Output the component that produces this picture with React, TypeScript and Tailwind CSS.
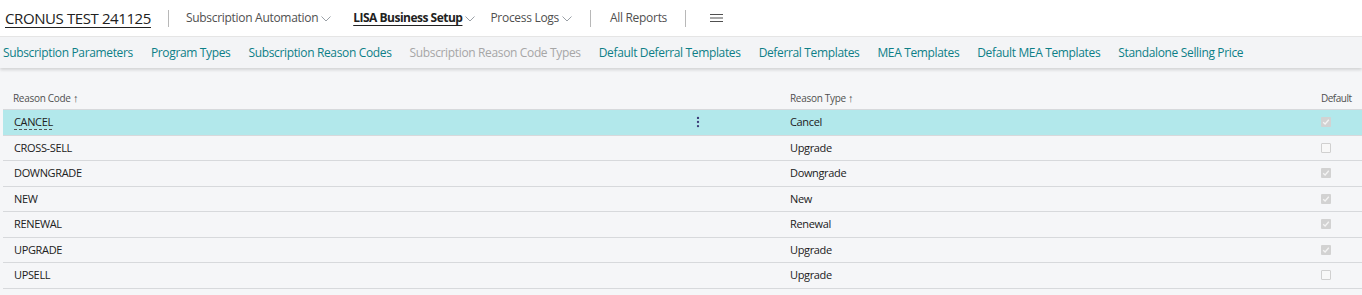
import { MoreVertical } from "lucide-react";

const subLinks = [
  { label: "Subscription Parameters" },
  { label: "Program Types" },
  { label: "Subscription Reason Codes" },
  { label: "Subscription Reason Code Types", disabled: true },
  { label: "Default Deferral Templates" },
  { label: "Deferral Templates" },
  { label: "MEA Templates" },
  { label: "Default MEA Templates" },
  { label: "Standalone Selling Price" },
];

const rows = [
  { code: "CANCEL", type: "Cancel", def: true },
  { code: "CROSS-SELL", type: "Upgrade", def: false },
  { code: "DOWNGRADE", type: "Downgrade", def: true },
  { code: "NEW", type: "New", def: true },
  { code: "RENEWAL", type: "Renewal", def: true },
  { code: "UPGRADE", type: "Upgrade", def: true },
  { code: "UPSELL", type: "Upgrade", def: false },
];

const Chevron = () => (
  <svg width="10" height="6" viewBox="0 0 10 6" className="ml-[3px] mt-[2px]">
    <path d="M0.5 0.5 L5 5 L9.5 0.5" fill="none" stroke="#9aa0a6" strokeWidth="1" />
  </svg>
);

const Checkbox = ({ checked }: { checked: boolean }) =>
  checked ? (
    <span className="flex h-[10px] w-[10px] items-center justify-center rounded-[1px] bg-[#d2d2d2]">
      <svg width="8" height="8" viewBox="0 0 8 8">
        <path d="M1.2 4.2 L3.1 6 L6.8 1.8" fill="none" stroke="#f4f4f4" strokeWidth="1.3" />
      </svg>
    </span>
  ) : (
    <span className="block h-[10px] w-[10px] rounded-[1px] border border-[#d0d0d0] bg-[#f8f8f8]" />
  );

export default function App() {
  return (
    <div className="h-[295px] w-[1362px] overflow-hidden bg-[#f5f6f8] font-['Open_Sans',sans-serif]">
      {/* Top nav */}
      <div className="flex h-[37px] items-center border-b border-[#e6e6e6] bg-white pl-[5px] text-[12px] text-[#505050]">
        <a className="text-[15px] leading-none tracking-[-0.4px] text-[#212121] underline underline-offset-[3px] decoration-1">
          CRONUS TEST 241125
        </a>
        <span className="mx-[17px] h-[17px] w-px bg-[#b8b8b8]" />
        <span className="flex items-center tracking-[-0.3px]">
          Subscription Automation
          <Chevron />
        </span>
        <span className="ml-[22px] flex items-center font-bold tracking-[-0.5px] text-[#212121]">
          <span className="underline underline-offset-[3px]">LISA Business Setup</span>
          <Chevron />
        </span>
        <span className="ml-[15px] flex items-center tracking-[-0.3px]">
          Process Logs
          <Chevron />
        </span>
        <span className="ml-[18px] mr-[19px] h-[17px] w-px bg-[#b8b8b8]" />
        <span className="tracking-[-0.3px]">All Reports</span>
        <span className="mx-[18px] h-[17px] w-px bg-[#b8b8b8]" />
        <svg width="13" height="10" viewBox="0 0 13 10" className="ml-[6px]">
          <path d="M0 1.5 H13 M0 5 H13 M0 8.5 H13" stroke="#505050" strokeWidth="1.2" />
        </svg>
      </div>

      {/* Sub nav */}
      <div className="relative z-10 flex h-[31px] items-center gap-[18px] bg-[#f3f4f6] pl-[3px] text-[12px] tracking-[-0.35px] shadow-[0_2px_3px_rgba(0,0,0,0.14)]">
        {subLinks.map((l) => (
          <span
            key={l.label}
            className={l.disabled ? "text-[#a6a6a6]" : "text-[#0d7f87]"}
          >
            {l.label}
          </span>
        ))}
      </div>

      {/* List */}
      <div className="pl-[3px] pt-[20px]">
        <div className="flex h-[21px] items-center text-[10px] text-[#505050] tracking-[-0.3px]">
          <span className="w-[787px] pl-[10px]">Reason Code <span className="text-[11px]">↑</span></span>
          <span className="w-[531px]">Reason Type <span className="text-[11px]">↑</span></span>
          <span className="tracking-[-0.5px]">Default</span>
        </div>
        <div className="border-t border-[#d7d9dc]">
          {rows.map((r, i) => (
            <div
              key={r.code}
              className={`flex h-[25.5px] items-center border-b border-[#d7d9dc] text-[11px] tracking-[-0.35px] text-[#212121] ${
                i === 0 ? "bg-[#b2e8eb]" : ""
              }`}
            >
              <span className="relative flex w-[787px] items-center pl-[11px]">
                <span
                  className={
                    i === 0
                      ? "underline decoration-dashed decoration-[#555] underline-offset-[3px]"
                      : ""
                  }
                >
                  {r.code}
                </span>
                {i === 0 && (
                  <MoreVertical
                    size={14}
                    strokeWidth={2}
                    className="absolute left-[688px] text-[#3c3c78]"
                  />
                )}
              </span>
              <span className="w-[531px]">{r.type}</span>
              <Checkbox checked={r.def} />
            </div>
          ))}
        </div>
      </div>
    </div>
  );
}
